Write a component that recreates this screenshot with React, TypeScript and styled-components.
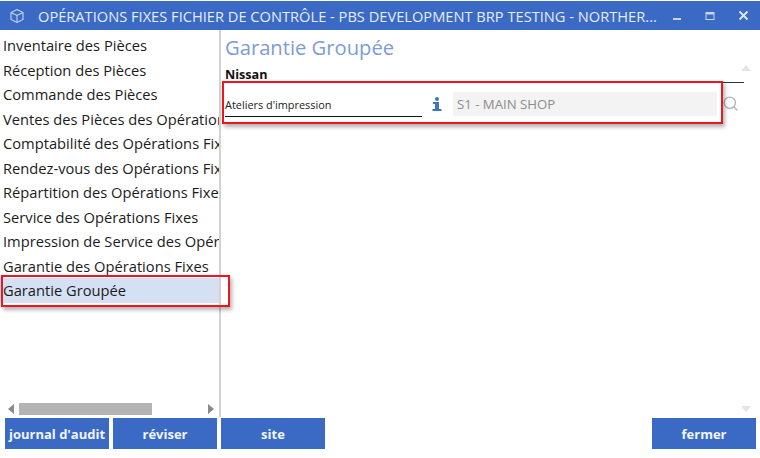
import React from "react";
import styled, { createGlobalStyle } from "styled-components";
import { Search } from "lucide-react";

const GlobalStyle = createGlobalStyle`
    html, body {
        margin: 0;
        padding: 0;
        background: #ffffff;
        overflow: hidden;
    }
`;

const font = `"Open Sans", "Noto Sans", sans-serif`;

const StyledWindow = styled.div`
    position: relative;
    width: 760px;
    height: 458px;
    padding-top: 1px;
    box-sizing: border-box;
    display: flex;
    flex-direction: column;
    font-family: ${font};
    overflow: hidden;
`;

const StyledTitleBar = styled.div`
    height: 29px;
    background: #3b6ac5;
    display: flex;
    align-items: center;
    padding-left: 9px;
    color: #e6ecf8;
    flex-shrink: 0;
`;

const StyledTitle = styled.div`
    font-size: 14.65px;
    line-height: 28px;
    margin-left: 13px;
    width: 620px;
    white-space: nowrap;
    letter-spacing: 0;
`;

const StyledWinButtons = styled.div`
    display: flex;
    align-items: center;
    gap: 23px;
    margin-left: 14px;
`;

const StyledBody = styled.div`
    display: flex;
    height: 387px;
    flex-shrink: 0;
`;

const StyledSidebar = styled.div`
    width: 219px;
    border-right: 2px solid #d2d2d2;
    display: flex;
    flex-direction: column;
    justify-content: space-between;
    flex-shrink: 0;
`;

const StyledNav = styled.div`
    padding-top: 3px;
    display: flex;
    flex-direction: column;
`;

const StyledNavItem = styled.div<{ $active?: boolean }>`
    height: 24.5px;
    line-height: 24px;
    padding-left: 3px;
    font-size: 14.7px;
    color: #1c1c1c;
    white-space: nowrap;
    overflow: hidden;
    background: ${(props) => (props.$active ? "#d5e0f2" : "transparent")};
`;

const StyledHScroll = styled.div`
    height: 14px;
    margin-bottom: 1px;
    display: flex;
    align-items: center;
    padding: 0 4px 0 8px;
    gap: 5px;
`;

const StyledThumb = styled.div`
    width: 133px;
    height: 12px;
    background: #b4b4b4;
    margin-right: 51px;
`;

const StyledContent = styled.div`
    flex: 1;
    padding: 5px 0 0 4px;
    display: flex;
    flex-direction: column;
    position: relative;
`;

const StyledHeading = styled.div`
    font-size: 20.2px;
    line-height: 25px;
    color: #7e9bd6;
`;

const StyledGroup = styled.div`
    width: 519px;
    margin-top: 7px;
    font-size: 12.6px;
    font-weight: 700;
    line-height: 15px;
    color: #111111;
    border-bottom: 1.5px solid #333333;
`;

const StyledFieldRow = styled.div`
    display: flex;
    align-items: center;
    margin-top: 8px;
    height: 25px;
`;

const StyledLabel = styled.div`
    width: 197px;
    height: 25px;
    box-sizing: content-box;
    border-bottom: 1px solid #111111;
    font-size: 10.9px;
    line-height: 28px;
    color: #222222;
`;

const StyledInfo = styled.svg`
    margin: 0 11px 0 10px;
`;

const StyledInput = styled.div`
    width: 260px;
    height: 24px;
    padding-left: 4px;
    background: #f3f3f3;
    color: #8c8c8c;
    font-size: 13.2px;
    line-height: 24px;
`;

const StyledSearch = styled.div`
    margin-left: 5px;
    display: flex;
    color: #b5b5b5;
`;

const StyledArrow = styled.div<{ $down?: boolean }>`
    position: absolute;
    right: 9px;
    ${(props) => (props.$down ? "bottom: 5px;" : "top: 35px;")}
    width: 0;
    height: 0;
    border-left: 5px solid transparent;
    border-right: 5px solid transparent;
    ${(props) => (props.$down ? "border-top: 6px solid #e4e4e4;" : "border-bottom: 6px solid #e4e4e4;")}
`;

const StyledScrollArrow = styled.div<{ $right?: boolean }>`
    width: 0;
    height: 0;
    border-top: 5px solid transparent;
    border-bottom: 5px solid transparent;
    ${(props) => (props.$right ? "border-left: 6px solid #8a8a8a;" : "border-right: 6px solid #8a8a8a;")}
`;

const StyledFooter = styled.div`
    display: flex;
    gap: 4px;
    padding: 1px 4px 0 5px;
    height: 31px;
`;

const StyledButton = styled.button<{ $push?: boolean }>`
    width: 104px;
    height: 31px;
    padding: 0;
    border: none;
    background: #3b6ac5;
    color: #f1f5fc;
    font-family: ${font};
    font-size: 13px;
    font-weight: 700;
    white-space: nowrap;
    overflow: hidden;
    ${(props) => (props.$push ? "margin-left: auto;" : "")}
`;

const StyledCallout = styled.div<{ $left: number; $top: number; $width: number; $height: number }>`
    position: absolute;
    left: ${(props) => props.$left}px;
    top: ${(props) => props.$top}px;
    width: ${(props) => props.$width}px;
    height: ${(props) => props.$height}px;
    box-sizing: border-box;
    border: 2px solid #f0141c;
    box-shadow: 2px 3px 4px rgba(0, 0, 0, 0.3);
    pointer-events: none;
`;

const navItems = [
    "Inventaire des Pièces",
    "Réception des Pièces",
    "Commande des Pièces",
    "Ventes des Pièces des Opérations Fixes",
    "Comptabilité des Opérations Fixes",
    "Rendez-vous des Opérations Fixes",
    "Répartition des Opérations Fixes",
    "Service des Opérations Fixes",
    "Impression de Service des Opérations",
    "Garantie des Opérations Fixes",
    "Garantie Groupée",
];

export default function App(): JSX.Element {
    return (
        <StyledWindow>
            <GlobalStyle />
            <StyledTitleBar>
                <svg width="16" height="16" viewBox="0 0 16 16" fill="none" stroke="#c9d6ef" strokeWidth="1.1">
                    <path d="M8 1.5 14 4.5V11.5L8 14.5 2 11.5V4.5Z" />
                    <path d="M2 4.5 8 7.5 14 4.5M8 7.5V14.5" />
                </svg>
                <StyledTitle>OPÉRATIONS FIXES FICHIER DE CONTRÔLE - PBS DEVELOPMENT BRP TESTING - NORTHER...</StyledTitle>
                <StyledWinButtons>
                    <svg width="10" height="10" viewBox="0 0 10 10" fill="#c9d6ef">
                        <rect x="1" y="7" width="8" height="2" />
                    </svg>
                    <svg width="10" height="10" viewBox="0 0 10 10" fill="none" stroke="#c9d6ef">
                        <rect x="1" y="1.5" width="8" height="7" />
                        <path d="M1 2.5H9" strokeWidth="2" />
                    </svg>
                    <svg width="11" height="11" viewBox="0 0 11 11" stroke="#e0e7f6" strokeWidth="1.8">
                        <path d="M1.5 1.5 9.5 9.5M9.5 1.5 1.5 9.5" />
                    </svg>
                </StyledWinButtons>
            </StyledTitleBar>
            <StyledBody>
                <StyledSidebar>
                    <StyledNav>
                        {navItems.map((item) => (
                            <StyledNavItem key={item} $active={item === "Garantie Groupée"}>
                                {item}
                            </StyledNavItem>
                        ))}
                    </StyledNav>
                    <StyledHScroll>
                        <StyledScrollArrow />
                        <StyledThumb />
                        <StyledScrollArrow $right />
                    </StyledHScroll>
                </StyledSidebar>
                <StyledContent>
                    <StyledHeading>Garantie Groupée</StyledHeading>
                    <StyledGroup>Nissan</StyledGroup>
                    <StyledFieldRow>
                        <StyledLabel>Ateliers d'impression</StyledLabel>
                        <StyledInfo width="10" height="14" viewBox="0 0 10 14" fill="#3f76b8">
                            <circle cx="5" cy="2" r="2" />
                            <path d="M1 5H7V12H9.5V14H.5V12H3V7H1Z" />
                        </StyledInfo>
                        <StyledInput>S1 - MAIN SHOP</StyledInput>
                        <StyledSearch>
                            <Search size={17} strokeWidth={2} />
                        </StyledSearch>
                    </StyledFieldRow>
                    <StyledArrow />
                    <StyledArrow $down />
                </StyledContent>
            </StyledBody>
            <StyledFooter>
                <StyledButton>journal d'audit</StyledButton>
                <StyledButton>réviser</StyledButton>
                <StyledButton>site</StyledButton>
                <StyledButton $push>fermer</StyledButton>
            </StyledFooter>
            <StyledCallout $left={1} $top={275} $width={229} $height={32} />
            <StyledCallout $left={222} $top={81} $width={501} $height={43} />
        </StyledWindow>
    );
}
